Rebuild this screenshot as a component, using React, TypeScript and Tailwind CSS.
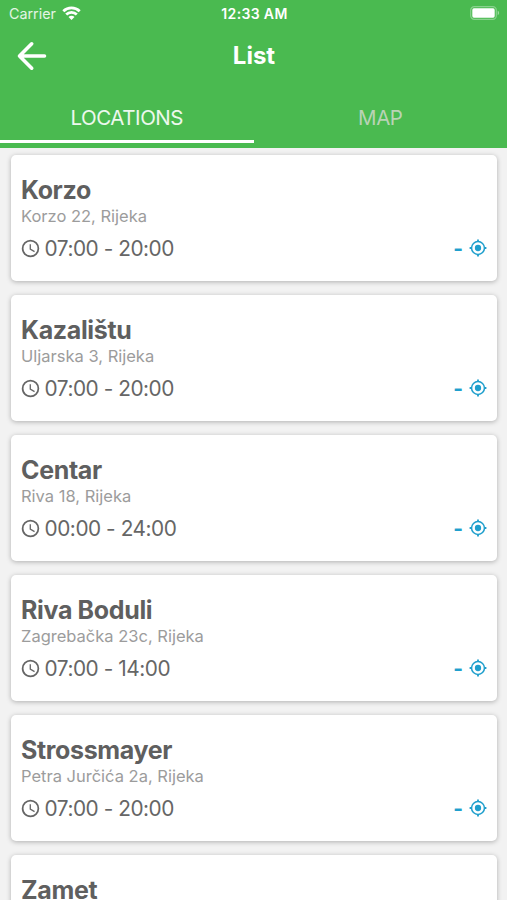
type Location = {
  name: string;
  address?: string;
  hours?: string;
};

const locations: Location[] = [
  { name: 'Korzo', address: 'Korzo 22, Rijeka', hours: '07:00 - 20:00' },
  { name: 'Kazalištu', address: 'Uljarska 3, Rijeka', hours: '07:00 - 20:00' },
  { name: 'Centar', address: 'Riva 18, Rijeka', hours: '00:00 - 24:00' },
  { name: 'Riva Boduli', address: 'Zagrebačka 23c, Rijeka', hours: '07:00 - 14:00' },
  { name: 'Strossmayer', address: 'Petra Jurčića 2a, Rijeka', hours: '07:00 - 20:00' },
  { name: 'Zamet' },
];

const ClockIcon = () => (
  <svg className="size-[21px] shrink-0" viewBox="0 0 24 24" fill="currentColor">
    <path d="M12,20A8,8 0 0,0 20,12A8,8 0 0,0 12,4A8,8 0 0,0 4,12A8,8 0 0,0 12,20M12,2A10,10 0 0,1 22,12A10,10 0 0,1 12,22C6.47,22 2,17.5 2,12A10,10 0 0,1 12,2M12.5,7V12.25L17,14.92L16.25,16.15L11,13V7H12.5Z" />
  </svg>
);

const GpsIcon = () => (
  <svg className="size-[18px] shrink-0" viewBox="0 0 24 24" fill="none" stroke="currentColor" strokeWidth="2">
    <circle cx="12" cy="12" r="8.6" />
    <circle cx="12" cy="12" r="4.2" fill="currentColor" stroke="none" />
    <path d="M12 0.8V4M12 20V23.2M0.8 12H4M20 12H23.2" strokeWidth="2.4" />
  </svg>
);

const StatusBar = () => (
  <div className="grid grid-cols-3 items-center h-7 pl-[9px] pr-[7px]">
    <div className="flex items-center gap-[6px]">
      <span className="text-[14.3px] text-white/85">Carrier</span>
      <svg className="w-[19px] h-[14px] -mt-[2px]" viewBox="0 0 19 14" fill="none" stroke="white" strokeWidth="2.8">
        <path d="M1.3 5.2a11.8 11.8 0 0 1 16.4 0" />
        <path d="M4.2 8.6a7.6 7.6 0 0 1 10.6 0" />
        <path d="M9.5 14L6.5 11a4.2 4.2 0 0 1 6 0Z" fill="white" stroke="none" />
      </svg>
    </div>
    <span className="-mt-px text-center text-[14px] font-semibold tracking-[0.35px] whitespace-nowrap">12:33 AM</span>
    <svg className="w-[30px] h-[14px] justify-self-end -mt-[2px]" viewBox="0 0 30 14">
      <rect x="0.7" y="0.7" width="25.6" height="12.6" rx="3.6" fill="none" stroke="white" strokeOpacity="0.35" strokeWidth="1.2" />
      <rect x="2.3" y="2.3" width="22.4" height="9.4" rx="1.6" fill="white" />
      <path d="M27.7 4.8v4.4a2.4 2.4 0 0 0 0-4.4Z" fill="white" fillOpacity="0.45" />
    </svg>
  </div>
);

const Header = () => (
  <header className="h-[147.5px] shrink-0 bg-[#4aba50] text-white">
    <StatusBar />
    <div className="grid grid-cols-3 items-center h-14 px-4">
      <svg className="size-8" viewBox="0 0 32 32" fill="none" stroke="white" strokeWidth="3.6" strokeLinecap="round" strokeLinejoin="round">
        <path d="M28.5 16H3.5M15.7 3.8L3.5 16L15.7 28.2" />
      </svg>
      <h1 className="pl-px text-center text-[24px] leading-8 font-bold">List</h1>
    </div>
    <div className="grid grid-cols-2 h-[59px] text-center text-[20.5px] leading-[68px]">
      <div className="h-[59px] border-b-[3px] border-white text-white/90 tracking-[-0.45px]">LOCATIONS</div>
      <div className="text-[#b9d3b5] tracking-[-0.5px]">MAP</div>
    </div>
  </header>
);

const LocationCard = ({ location }: { location: Location }) => (
  <div className="h-[125.5px] shrink-0 rounded-[5px] bg-white px-[10px] pt-[20px] shadow-[0_1px_5px_rgba(0,0,0,0.28)]">
    <h2 className="text-[25px] leading-[30px] font-bold tracking-[-0.35px] text-[#5f5f5f]">{location.name}</h2>
    {location.address && (
      <p className="text-[16.5px] leading-[22px] text-[#9c9c9c]">{location.address}</p>
    )}
    {location.hours && (
      <div className="flex items-center justify-between mt-[7px] h-[28px]">
        <div className="flex items-center gap-[4px] -ml-[1.5px] text-[#666]">
          <ClockIcon />
          <span className="pt-px text-[20.8px] leading-7 tracking-[-0.45px]">{location.hours}</span>
        </div>
        <div className="flex items-center gap-[6px] text-[#1f9fcd]">
          <span className="pt-px text-[21px] leading-7 font-bold">-</span>
          <GpsIcon />
        </div>
      </div>
    )}
  </div>
);

export default function App() {
  return (
    <div className="flex flex-col h-[900px] w-full overflow-hidden bg-[#f2f2f2] font-['Inter','Liberation_Sans',sans-serif]">
      <Header />
      <main className="flex flex-col gap-[14.5px] min-h-0 overflow-hidden pt-[7.5px] pl-[11px] pr-[10px]">
        {locations.map((location) => (
          <LocationCard key={location.name} location={location} />
        ))}
      </main>
    </div>
  );
}
